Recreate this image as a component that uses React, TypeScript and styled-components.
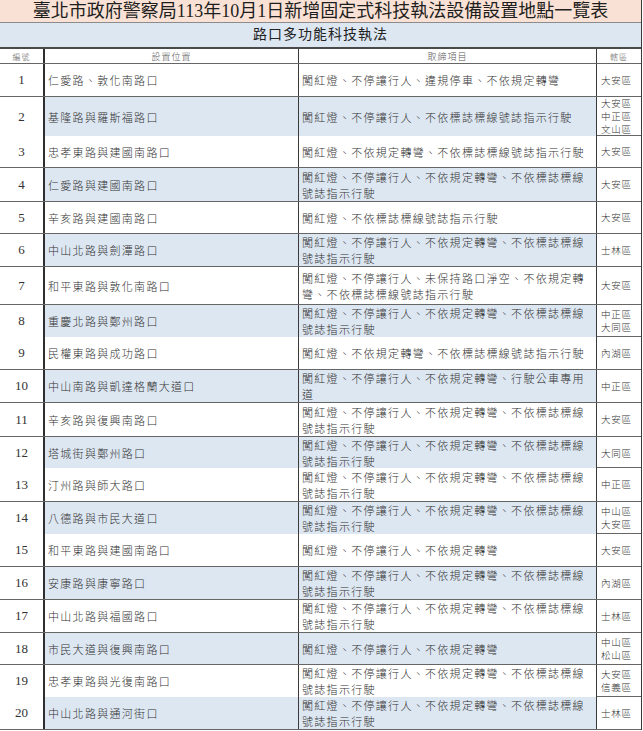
import React from 'react';
import styled, { createGlobalStyle } from 'styled-components';

const GlobalStyle = createGlobalStyle`
  * { box-sizing: border-box; }
  body {
    margin: 0;
    background: #ffffff;
    font-family: "Liberation Serif", "Noto Sans CJK TC", serif;
    color: #262626;
  }
`;

const LONG = '闖紅燈、不停讓行人、不依規定轉彎、不依標誌標線號誌指示行駛';
const SHORT = '闖紅燈、不停讓行人、不依規定轉彎';

const rows = [
  { no: 1, place: '仁愛路、敦化南路口', items: '闖紅燈、不停讓行人、違規停車、不依規定轉彎', area: ['大安區'], h: 33 },
  { no: 2, place: '基隆路與羅斯福路口', items: '闖紅燈、不停讓行人、不依標誌標線號誌指示行駛', area: ['大安區', '中正區', '文山區'], h: 39 },
  { no: 3, place: '忠孝東路與建國南路口', items: '闖紅燈、不依規定轉彎、不依標誌標線號誌指示行駛', area: ['大安區'], h: 32 },
  { no: 4, place: '仁愛路與建國南路口', items: LONG, area: ['大安區'], h: 34 },
  { no: 5, place: '辛亥路與建國南路口', items: '闖紅燈、不依標誌標線號誌指示行駛', area: ['大安區'], h: 32 },
  { no: 6, place: '中山北路與劍潭路口', items: LONG, area: ['士林區'], h: 33 },
  { no: 7, place: '和平東路與敦化南路口', items: '闖紅燈、不停讓行人、未保持路口淨空、不依規定轉彎、不依標誌標線號誌指示行駛', area: ['大安區'], h: 38 },
  { no: 8, place: '重慶北路與鄭州路口', items: LONG, area: ['中正區', '大同區'], h: 32 },
  { no: 9, place: '民權東路與成功路口', items: '闖紅燈、不依規定轉彎、不依標誌標線號誌指示行駛', area: ['內湖區'], h: 33 },
  { no: 10, place: '中山南路與凱達格蘭大道口', items: '闖紅燈、不停讓行人、不依規定轉彎、行駛公車專用道', area: ['中正區'], h: 33 },
  { no: 11, place: '辛亥路與復興南路口', items: LONG, area: ['大安區'], h: 34 },
  { no: 12, place: '塔城街與鄭州路口', items: LONG, area: ['大同區'], h: 31 },
  { no: 13, place: '汀州路與師大路口', items: LONG, area: ['中正區'], h: 34 },
  { no: 14, place: '八德路與市民大道口', items: LONG, area: ['中山區', '大安區'], h: 32 },
  { no: 15, place: '和平東路與建國南路口', items: SHORT, area: ['大安區'], h: 33 },
  { no: 16, place: '安康路與康寧路口', items: LONG, area: ['內湖區'], h: 33 },
  { no: 17, place: '中山北路與福國路口', items: LONG, area: ['士林區'], h: 33 },
  { no: 18, place: '市民大道與復興南路口', items: SHORT, area: ['中山區', '松山區'], h: 32 },
  { no: 19, place: '忠孝東路與光復南路口', items: LONG, area: ['大安區', '信義區'], h: 32 },
  { no: 20, place: '中山北路與通河街口', items: LONG, area: ['士林區'], h: 33 },
];

const Sheet = styled.div`
  width: 642px;
  border-right: 1px solid #3a3a3a;
`;

const TitleBar = styled.div`
  height: 23px;
  background: #f9e2d5;
  border-bottom: 1px solid #8c8c8c;
  display: flex;
  align-items: center;
  justify-content: center;
  font-size: 18px;
  line-height: 1;
  color: #1e1e1e;
`;

const SubTitleBar = styled.div`
  height: 26px;
  background: #dde7f2;
  border-bottom: 2px solid #4a4a4a;
  display: flex;
  align-items: center;
  justify-content: center;
  font-size: 14px;
  letter-spacing: 1px;
  line-height: 1;
  color: #222;
`;

const Grid = styled.div<{ $h: number }>`
  display: grid;
  grid-template-columns: 45px 254px 298px 1fr;
  height: ${p => p.$h}px;
  border-bottom: 1.5px solid #666;
`;

const HeadCell = styled.div<{ $size: number }>`
  display: flex;
  align-items: center;
  justify-content: center;
  border-right: 1px solid #3a3a3a;
  font-size: ${p => p.$size}px;
  font-weight: 300;
  letter-spacing: 1px;
  color: #555;
  &:first-child { border-right: 2px solid #2e2e2e; }
  &:last-child { border-right: none; }
`;

const NumCell = styled.div`
  display: flex;
  align-items: center;
  justify-content: center;
  border-right: 2px solid #2e2e2e;
  font-size: 13px;
  color: #333;
  background: #ffffff;
`;

const TextCell = styled.div<{ $shade: boolean }>`
  display: flex;
  align-items: center;
  padding: 0 8px 0 3px;
  border-right: 1px solid #3a3a3a;
  background: ${p => (p.$shade ? '#dde7f2' : '#ffffff')};
  font-family: "Noto Sans CJK TC", "Liberation Serif", sans-serif;
  font-size: 11px;
  font-weight: 300;
  letter-spacing: 1.3px;
  line-height: 16px;
  color: #333;
`;

const AreaCell = styled.div`
  display: flex;
  flex-direction: column;
  justify-content: center;
  padding-left: 4px;
  font-family: "Noto Sans CJK TC", sans-serif;
  font-size: 9.5px;
  font-weight: 300;
  letter-spacing: 0.8px;
  line-height: 13px;
  color: #333;
`;

export default function App() {
  return (
    <>
      <GlobalStyle />
      <Sheet>
        <TitleBar>臺北市政府警察局113年10月1日新增固定式科技執法設備設置地點一覽表</TitleBar>
        <SubTitleBar>路口多功能科技執法</SubTitleBar>
        <Grid $h={15}>
          <HeadCell $size={8}>編號</HeadCell>
          <HeadCell $size={9}>設置位置</HeadCell>
          <HeadCell $size={9}>取締項目</HeadCell>
          <HeadCell $size={8}>轄區</HeadCell>
        </Grid>
        {rows.map(r => {
          const shade = r.no % 2 === 0;
          return (
            <Grid key={r.no} $h={r.h}>
              <NumCell>{r.no}</NumCell>
              <TextCell $shade={shade}>{r.place}</TextCell>
              <TextCell $shade={shade}>{r.items}</TextCell>
              <AreaCell>
                {r.area.map(a => (
                  <span key={a}>{a}</span>
                ))}
              </AreaCell>
            </Grid>
          );
        })}
      </Sheet>
    </>
  );
}
